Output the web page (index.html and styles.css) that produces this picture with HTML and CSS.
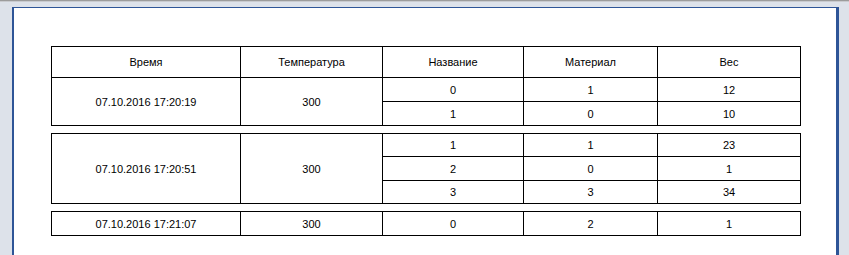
FILE: index.html
```html
<!DOCTYPE html>
<html lang="ru">
<head>
<meta charset="utf-8">
<title>Отчёт</title>
<link rel="stylesheet" href="styles.css">
</head>
<body>
<div class="topbar"></div>
<div class="sheet">
  <table class="grp">
    <colgroup><col class="c1"><col class="c2"><col class="c3"><col class="c4"><col class="c5"></colgroup>
    <tr class="head"><td>Время</td><td>Температура</td><td>Название</td><td>Материал</td><td>Вес</td></tr>
    <tr class="r24"><td rowspan="2">07.10.2016 17:20:19</td><td rowspan="2">300</td><td>0</td><td>1</td><td>12</td></tr>
    <tr class="r24"><td>1</td><td>0</td><td>10</td></tr>
  </table>
  <table class="grp">
    <colgroup><col class="c1"><col class="c2"><col class="c3"><col class="c4"><col class="c5"></colgroup>
    <tr class="r23"><td rowspan="3">07.10.2016 17:20:51</td><td rowspan="3">300</td><td>1</td><td>1</td><td>23</td></tr>
    <tr class="r24"><td>2</td><td>0</td><td>1</td></tr>
    <tr class="r23"><td>3</td><td>3</td><td>34</td></tr>
  </table>
  <table class="grp">
    <colgroup><col class="c1"><col class="c2"><col class="c3"><col class="c4"><col class="c5"></colgroup>
    <tr class="r24"><td>07.10.2016 17:21:07</td><td>300</td><td>0</td><td>2</td><td>1</td></tr>
  </table>
</div>
</body>
</html>
```
FILE: styles.css
```css
html, body {
  margin: 0;
  padding: 0;
  background: #dde2ea;
  height: 100%;
  overflow: hidden;
}
.topbar {
  height: 1px;
  border-top: 1px solid #9c9c9c;
  background: #c9cbcf;
}
.sheet {
  margin: 5px 0 0 12px;
  width: 827px;
  height: calc(100vh - 7px);
  box-sizing: border-box;
  background: #fff;
  border-left: 2px solid #2e5597;
  border-top: 1px solid #2e5597;
  border-right: 3px solid #2e5597;
  padding: 38px 0 0 37px;
  display: flex;
  flex-direction: column;
  gap: 7px;
}
.grp {
  border-collapse: collapse;
  table-layout: fixed;
  width: 749px;
  font-family: "Liberation Sans", Arial, sans-serif;
  font-size: 11px;
  color: #000;
}
.grp td {
  border: 1px solid #000;
  text-align: center;
  vertical-align: middle;
  padding: 0;
}
.c1 { width: 189px; }
.c2 { width: 142px; }
.c3 { width: 141px; }
.c4 { width: 134px; }
.c5 { width: 143px; }
.head { height: 31px; }
.r24 { height: 24px; }
.r23 { height: 23px; }
```
